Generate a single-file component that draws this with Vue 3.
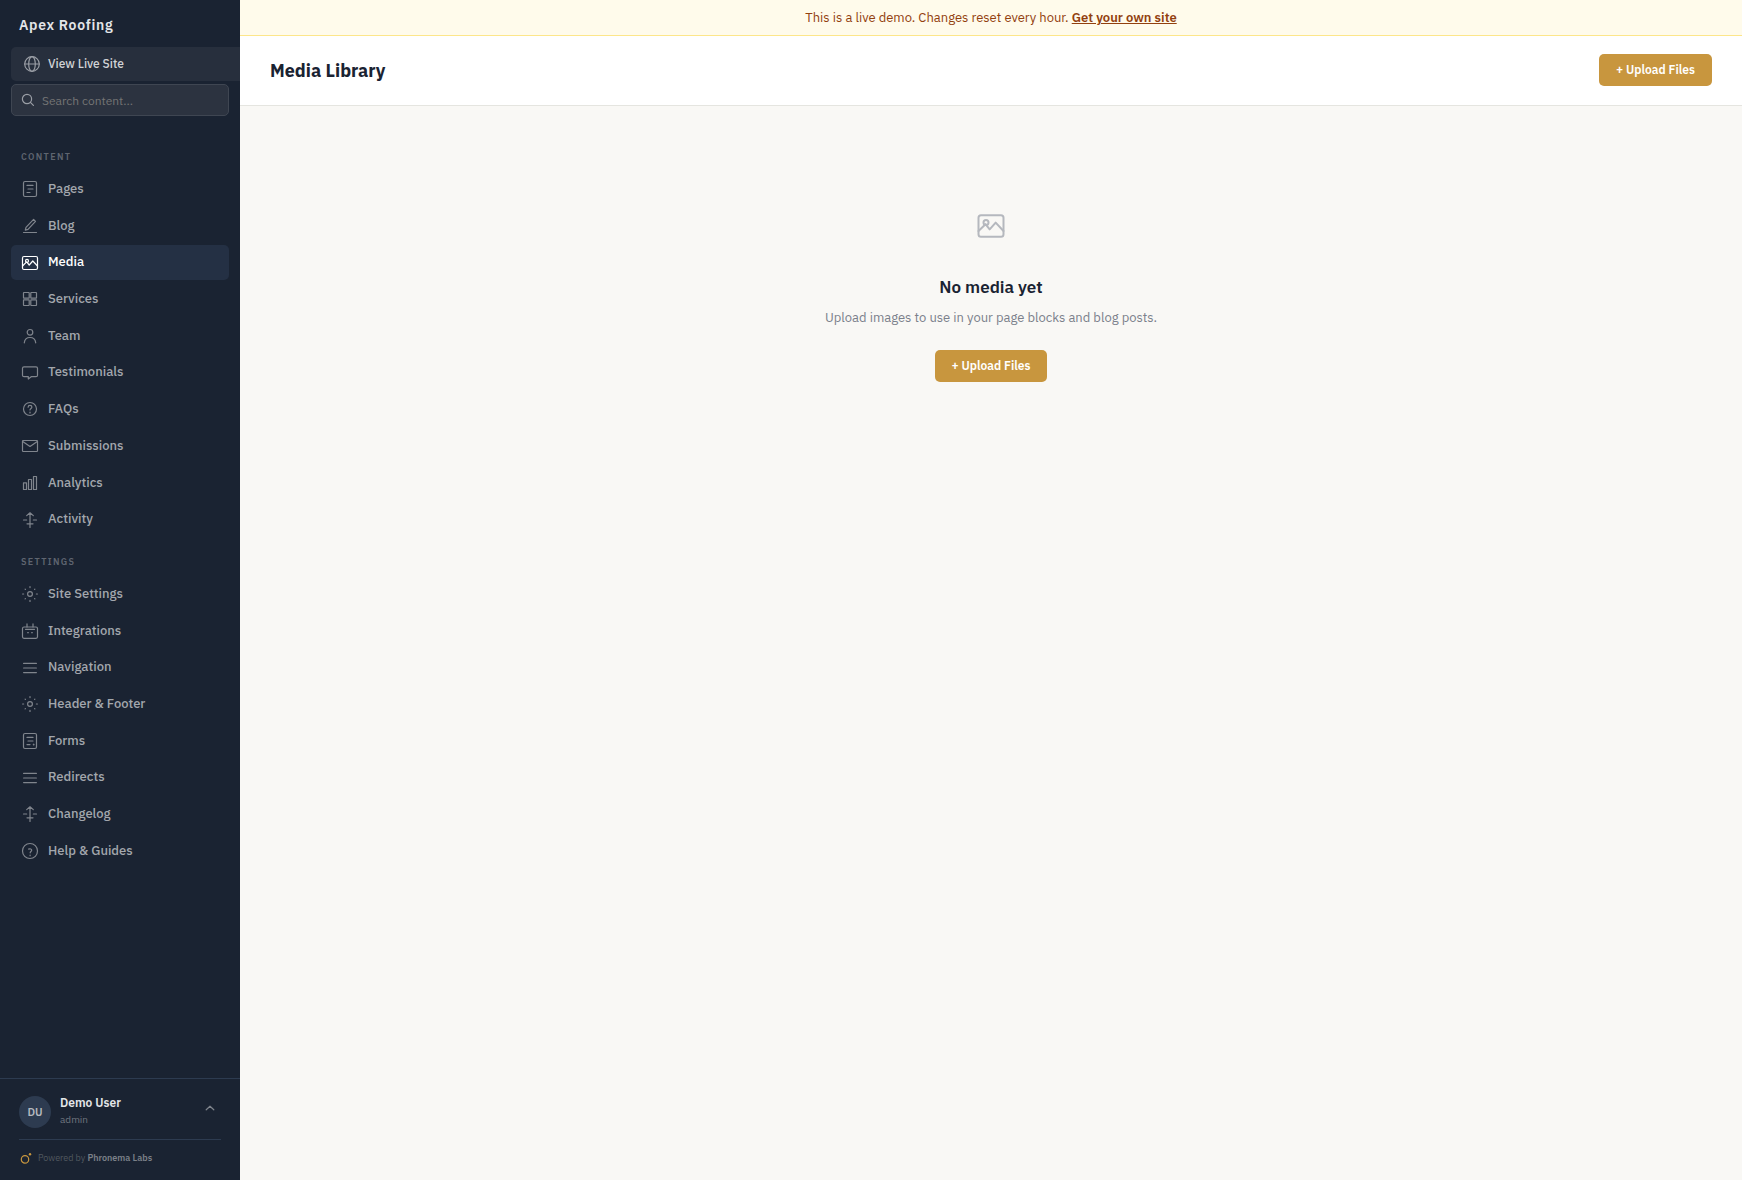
<script setup>
import { ref } from 'vue'

const query = ref('')

const shapes = {
  pages: '<rect x="2.5" y="1.5" width="13" height="15" rx="1.5"/><path d="M6 5.4h6M7 9h5M6 12.5h3"/>',
  blog: '<path d="M2.5 15.5h13M12.6 2.4l1.9 1.9L7 12.4l-2.7.8.7-2.8z"/>',
  media: '<rect x="1.5" y="2.5" width="15" height="13" rx="1.5"/><circle cx="6" cy="6.9" r="1.5"/><path d="M1.5 12l4.2-4.1L8.2 11l3.6-4 4.7 5"/>',
  services: '<rect x="2.5" y="2.5" width="5.7" height="5.7" rx=".4"/><rect x="9.8" y="2.5" width="5.7" height="5.7" rx=".4"/><rect x="2.5" y="9.8" width="5.7" height="5.7" rx=".4"/><rect x="9.8" y="9.8" width="5.7" height="5.7" rx=".4"/>',
  team: '<circle cx="9" cy="5.3" r="2.8"/><path d="M3.3 15.8c.3-3.5 2.4-5.3 5.7-5.3s5.4 1.8 5.7 5.3"/>',
  testimonials: '<path d="M3 2.8h12c.9 0 1.5.6 1.5 1.5v6.9c0 .9-.6 1.5-1.5 1.5h-4.8L7.3 15v-2.3H3c-.9 0-1.5-.6-1.5-1.5V4.3c0-.9.6-1.5 1.5-1.5z"/>',
  faqs: '<circle cx="9" cy="9" r="6.5"/><path d="M7.1 7.2c0-1.1.8-1.8 1.9-1.8s1.9.7 1.9 1.7c0 1.3-1.9 1.4-1.9 2.9M9 12v.9"/>',
  submissions: '<rect x="1.5" y="3.5" width="15" height="11" rx=".8"/><path d="M1.7 4.4L9 9.5l7.3-5.1"/>',
  analytics: '<path d="M2.5 8.8h3v6.7h-3zM7.5 5.5h3v10h-3zM12.5 2.5h3v13h-3z"/>',
  activity: '<path d="M9 1.8v14.7M5.7 4.6L9 1.8l3.3 2.8M2.5 9h3.2M12.3 9h3.2M6 12.8h6"/>',
  gear: '<circle cx="9" cy="9" r="2.4"/><path d="M9 1.6v1M9 15.4v1M1.6 9h1M15.4 9h1M4.1 4.1l.3.3M13.6 13.6l.3.3M4.1 13.9l.3-.3M13.6 4.4l.3-.3"/>',
  integrations: '<rect x="1.5" y="5" width="15" height="11.3" rx="1.5"/><path d="M6 1.9v3M12 1.9v3M4.5 7.3h9M6.7 10.7h.6M10.7 10.7h.6"/>',
  lines: '<path d="M2.6 4.4h12.8M2.6 9h12.8M2.6 13.6h12.8"/>',
  forms: '<rect x="2.5" y="1.5" width="13" height="15" rx="1.5"/><path d="M6 5.4h6M7 9h5M6 12.6h3M12.3 12.6h.8M12.7 12.2v.8"/>',
  help: '<circle cx="9" cy="9" r="7.5"/><path d="M7.6 7.1c1.6-.7 3.1 0 3.1 1.2 0 1.2-1.5 1.2-1.5 2.5M9.1 13v.7"/>',
}

const sections = [
  {
    title: 'Content',
    items: [
      ['Pages', 'pages'],
      ['Blog', 'blog'],
      ['Media', 'media'],
      ['Services', 'services'],
      ['Team', 'team'],
      ['Testimonials', 'testimonials'],
      ['FAQs', 'faqs'],
      ['Submissions', 'submissions'],
      ['Analytics', 'analytics'],
      ['Activity', 'activity'],
    ],
  },
  {
    title: 'Settings',
    items: [
      ['Site Settings', 'gear'],
      ['Integrations', 'integrations'],
      ['Navigation', 'lines'],
      ['Header & Footer', 'gear'],
      ['Forms', 'forms'],
      ['Redirects', 'lines'],
      ['Changelog', 'activity'],
      ['Help & Guides', 'help'],
    ],
  },
]
</script>

<template>
  <div class="app">
    <aside class="sidebar">
      <div class="brand">Apex Roofing</div>
      <a class="live" href="#">
        <svg width="16" height="16" viewBox="0 0 16 16" aria-hidden="true">
          <circle cx="8" cy="8" r="7.3" />
          <ellipse cx="8" cy="8" rx="3.3" ry="7.3" />
          <path d="M.7 8h14.6" />
        </svg>
        View Live Site
      </a>
      <label class="search">
        <svg width="14" height="14" viewBox="0 0 14 14" aria-hidden="true">
          <circle cx="6" cy="6" r="4.6" />
          <path d="M9.4 9.4l3 3" />
        </svg>
        <input v-model="query" type="text" placeholder="Search content..." aria-label="Search content" />
      </label>

      <nav class="nav">
        <section v-for="section in sections" :key="section.title" class="group">
          <h2 class="group-title">{{ section.title }}</h2>
          <ul class="list">
            <li v-for="[label, icon] in section.items" :key="label">
              <a class="item" :class="{ active: label === 'Media' }" href="#">
                <svg class="icon" width="18" height="18" viewBox="0 0 18 18" aria-hidden="true" v-html="shapes[icon]"></svg>
                {{ label }}
              </a>
            </li>
          </ul>
        </section>
      </nav>

      <footer class="account">
        <button class="user" type="button">
          <span class="avatar">DU</span>
          <span class="who">
            <span class="name">Demo User</span>
            <span class="role">admin</span>
          </span>
          <svg class="caret" width="12" height="12" viewBox="0 0 12 12" aria-hidden="true">
            <path d="M2.2 7.8L6 4.2l3.8 3.6" />
          </svg>
        </button>
        <div class="powered">
          <svg width="12" height="12" viewBox="0 0 12 12" aria-hidden="true">
            <circle cx="5" cy="7.4" r="3.7" />
            <circle class="dot" cx="10" cy="2.3" r="1.2" />
          </svg>
          <span>Powered by <a href="#">Phronema Labs</a></span>
        </div>
      </footer>
    </aside>

    <div class="content">
      <div class="banner">This is a live demo. Changes reset every hour. <a href="#">Get your own site</a></div>
      <header class="topbar">
        <h1>Media Library</h1>
        <button class="upload" type="button">+ Upload Files</button>
      </header>
      <main class="empty">
        <svg class="picture" width="30" height="30" viewBox="0 0 18 18" aria-hidden="true" v-html="shapes.media"></svg>
        <h2>No media yet</h2>
        <p>Upload images to use in your page blocks and blog posts.</p>
        <button class="upload" type="button">+ Upload Files</button>
      </main>
    </div>
  </div>
</template>

<style>
body {
  margin: 0;
  background: #f9f8f5;
}
</style>

<style scoped>
.app {
  display: flex;
  min-height: 100vh;
  font-family: "IBM Plex Sans", Roboto, "Noto Sans", sans-serif;
  font-size: 13px;
  color: #1a2332;
}
.app * {
  box-sizing: border-box;
}
a {
  color: inherit;
  text-decoration: none;
}
button,
input {
  font: inherit;
}
svg {
  flex: none;
  fill: none;
  stroke: currentColor;
  stroke-width: 1.2;
  stroke-linecap: round;
  stroke-linejoin: round;
}

.sidebar {
  position: sticky;
  top: 0;
  flex: none;
  display: flex;
  flex-direction: column;
  width: 240px;
  height: 100vh;
  background: #1a2332;
}
.brand {
  padding: 14px 19px 11px;
  font-size: 14px;
  font-weight: 600;
  line-height: 22px;
  letter-spacing: 0.05em;
  color: #e4e6e9;
}
.live {
  display: flex;
  align-items: center;
  gap: 8px;
  margin-left: 11px;
  padding: 8px 13px;
  border-radius: 5px 0 0 5px;
  background: #272f3d;
  font-size: 12px;
  font-weight: 500;
  line-height: 18px;
  color: #d1d3d6;
}
.live svg {
  color: #9a9ea5;
}
.search {
  display: flex;
  align-items: center;
  gap: 7px;
  margin: 3px 11px 0;
  padding: 0 9px;
  border: 1px solid #3f4652;
  border-radius: 5px;
  background: #2c3340;
  color: #9a9ea5;
}
.search input {
  flex: 1;
  min-width: 0;
  height: 30px;
  padding: 0;
  border: 0;
  outline: 0;
  background: transparent;
  font-size: 12px;
  color: #ffffff;
}
.search input::placeholder {
  color: #757575;
  opacity: 1;
}

.nav {
  flex: 1;
  min-height: 0;
  padding: 34px 11px 0;
  overflow: hidden;
}
.group + .group {
  margin-top: 18px;
}
.group-title {
  margin: 0 0 8px;
  padding-left: 10px;
  font-size: 9px;
  font-weight: 600;
  line-height: 14px;
  letter-spacing: 0.15em;
  text-transform: uppercase;
  color: #5f6570;
}
.list {
  display: grid;
  gap: 2px;
  margin: 0;
  padding: 0;
  list-style: none;
}
.item {
  display: flex;
  align-items: center;
  gap: 9px;
  padding: 5px 10px;
  border-radius: 5px;
  font-weight: 500;
  line-height: 1.9;
  color: #a3a7ad;
}
.icon {
  color: #80858d;
}
.item.active {
  background: #243044;
  color: #ffffff;
}
.item.active .icon {
  color: #ffffff;
}

.account {
  padding: 16px 19px 15px;
  border-top: 1px solid #2d3b50;
}
.user {
  display: flex;
  align-items: center;
  gap: 9px;
  width: 100%;
  padding: 0 5px 0 0;
  border: 0;
  background: none;
  text-align: left;
}
.avatar {
  display: grid;
  place-items: center;
  width: 32px;
  height: 32px;
  border-radius: 50%;
  background: #2d3b50;
  font-size: 11px;
  font-weight: 600;
  line-height: 16px;
  color: #b5b9bf;
}
.who {
  display: grid;
  flex: 1;
}
.name {
  font-size: 12px;
  font-weight: 600;
  line-height: 16px;
  color: #e4e6e9;
}
.role {
  font-size: 10px;
  line-height: 18px;
  color: #6f757f;
}
.caret {
  align-self: flex-start;
  margin-top: 7px;
  color: #80858d;
}
.powered {
  display: flex;
  align-items: center;
  gap: 6px;
  margin-top: 10px;
  padding: 11px 0 0 1px;
  border-top: 1px solid #2d3b50;
  font-size: 9px;
  line-height: 14px;
  color: #51585f;
}
.powered a {
  font-weight: 600;
  color: #7b8088;
}
.powered svg {
  color: #c8963e;
}
.powered .dot {
  fill: currentColor;
  stroke: none;
}

.content {
  flex: 1;
  min-width: 0;
}
.banner {
  padding: 8px 16px 7px;
  border-bottom: 1px solid #fde68a;
  background: #fffbeb;
  line-height: 20px;
  text-align: center;
  color: #92400e;
}
.banner a {
  font-weight: 600;
  text-decoration: underline;
}
.topbar {
  display: flex;
  align-items: center;
  justify-content: space-between;
  padding: 18px 30px 19px;
  border-bottom: 1px solid #e5e5e0;
  background: #ffffff;
}
.topbar h1 {
  margin: 0;
  font-size: 18px;
  font-weight: 700;
  line-height: 25px;
}
.upload {
  padding: 0 17px;
  border: 0;
  border-radius: 5px;
  background: #c8963e;
  font-size: 12px;
  font-weight: 600;
  line-height: 32px;
  color: #ffffff;
}
.empty {
  display: flex;
  flex-direction: column;
  align-items: center;
  padding: 105px 30px 60px;
  text-align: center;
}
.picture {
  color: #b5b8be;
}
.empty h2 {
  margin: 35px 0 10px;
  font-size: 17px;
  font-weight: 600;
  line-height: 22px;
}
.empty p {
  margin: 0 0 22px;
  line-height: 20px;
  color: #7b808b;
}
</style>
